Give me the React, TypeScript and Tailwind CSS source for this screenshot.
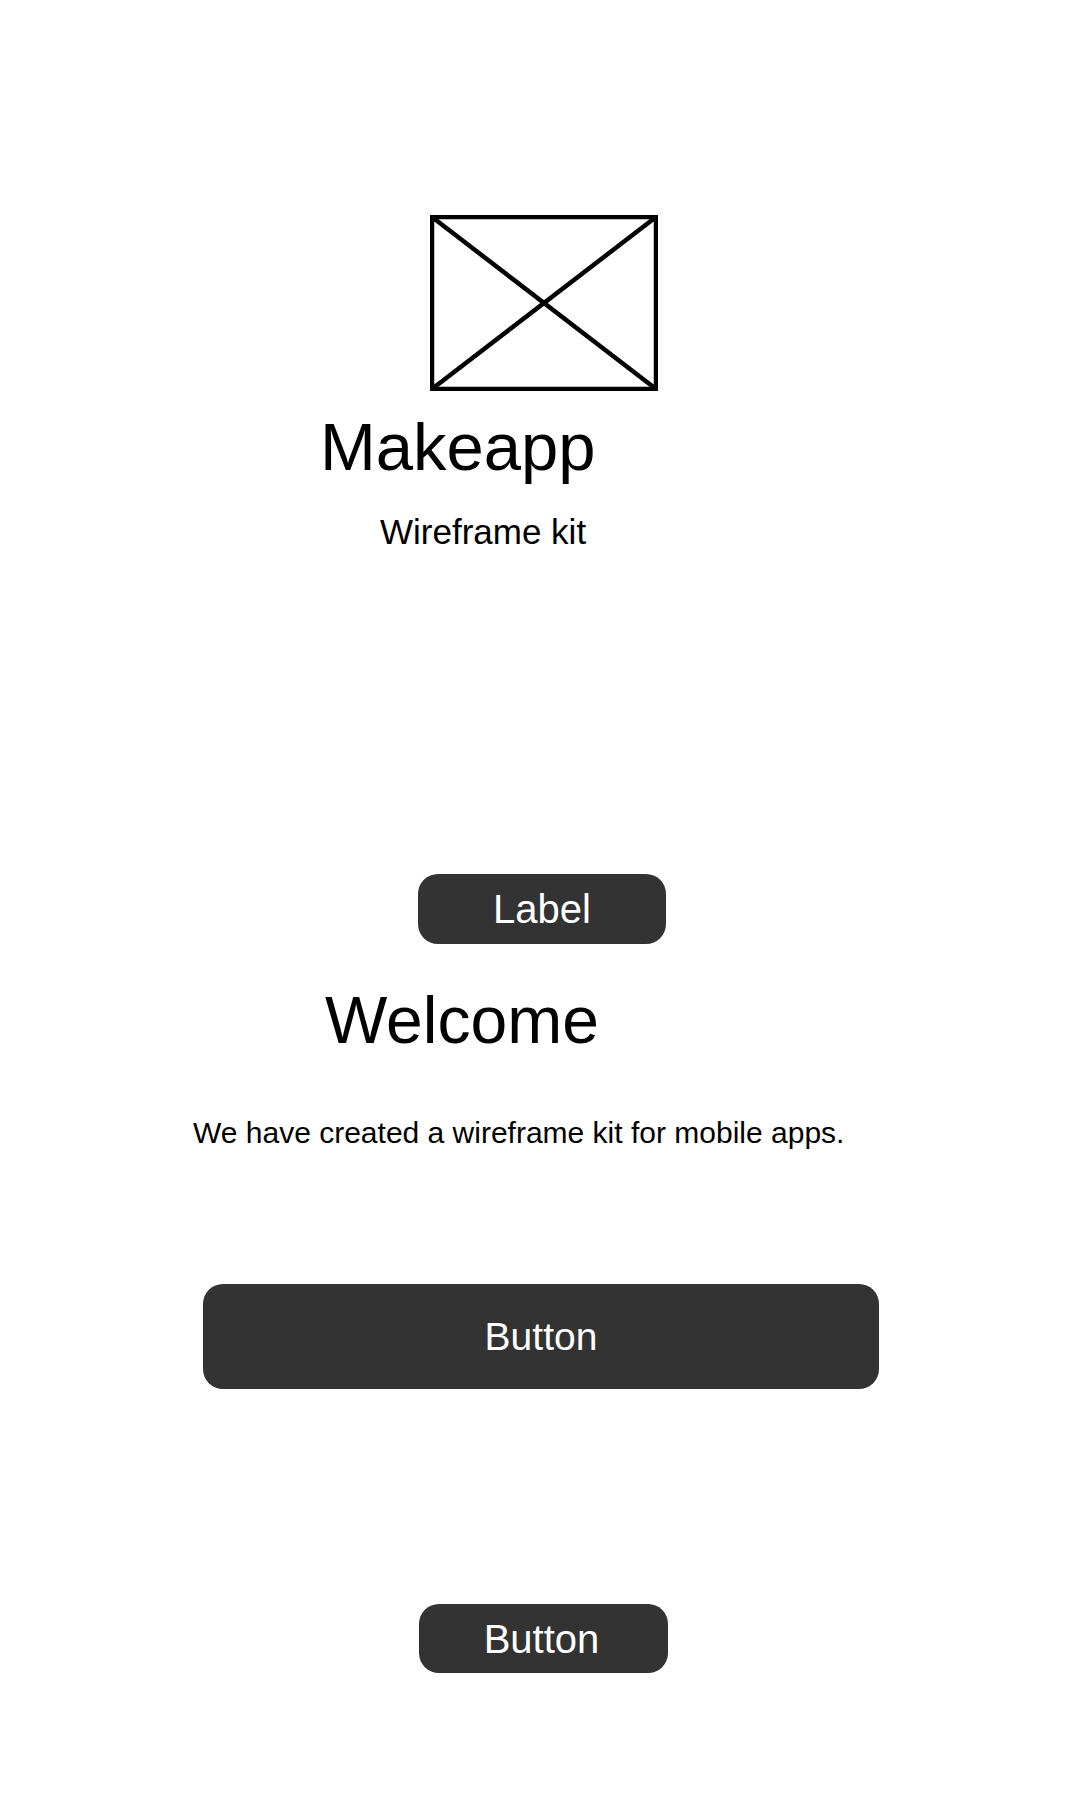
import React from 'react';

const ImagePlaceholder: React.FC = () => (
  <svg width="228" height="176" viewBox="0 0 228 176" className="block">
    <rect x="2" y="2" width="224" height="172" fill="none" stroke="#000" strokeWidth="4.5" />
    <line x1="2" y1="2" x2="226" y2="174" stroke="#000" strokeWidth="4.5" />
    <line x1="226" y1="2" x2="2" y2="174" stroke="#000" strokeWidth="4.5" />
  </svg>
);

export default function App() {
  return (
    <div className="w-[1080px] h-[1800px] bg-white text-black font-['Liberation_Sans',Arial,sans-serif] pt-[215px] flex flex-col items-start">
      {/* logo */}
      <div className="ml-[430px]">
        <ImagePlaceholder />
      </div>

      <h1 className="ml-[320px] mt-[22px] text-[67px] leading-none font-normal">Makeapp</h1>
      <p className="ml-[380px] mt-[34px] text-[35px] leading-none">Wireframe kit</p>

      {/* label pill */}
      <div className="ml-[418px] mt-[325px] w-[248px] h-[70px] rounded-[20px] bg-[#333333] flex items-center justify-center">
        <span className="text-white text-[40px] leading-none">Label</span>
      </div>

      <h2 className="ml-[325px] mt-[43px] text-[66px] leading-none font-normal">Welcome</h2>
      <p className="ml-[193px] mt-[65px] text-[30px] leading-none">We have created a wireframe kit for mobile apps.</p>

      {/* buttons */}
      <button className="ml-[203px] mt-[136px] w-[676px] h-[105px] rounded-[20px] bg-[#333333] flex items-center justify-center">
        <span className="text-white text-[39px] leading-none">Button</span>
      </button>

      <button className="ml-[419px] mt-[215px] w-[249px] h-[69px] rounded-[20px] bg-[#333333] flex items-center justify-center">
        <span className="text-white text-[40px] leading-none -ml-[4px]">Button</span>
      </button>
    </div>
  );
}
